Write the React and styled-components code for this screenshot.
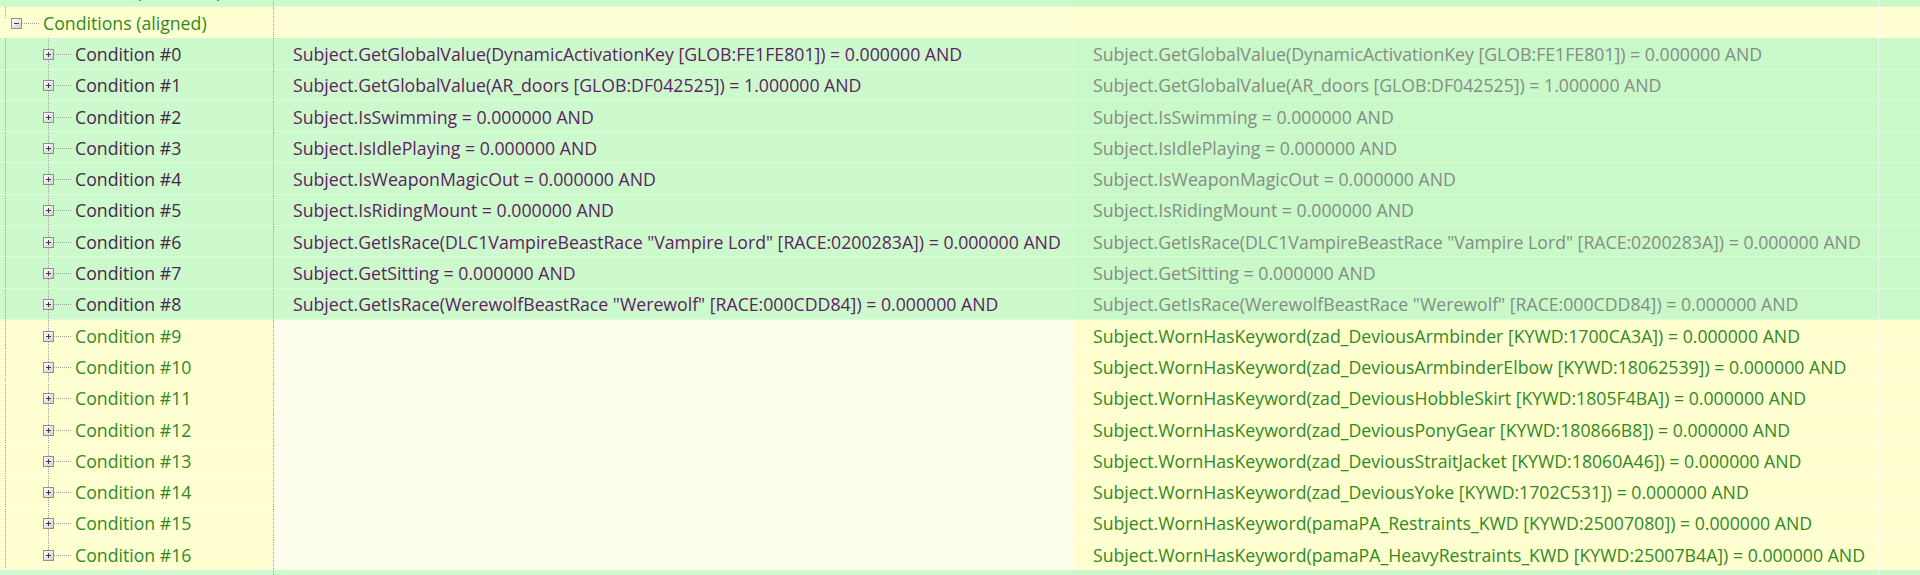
import React from 'react';
import styled, { createGlobalStyle } from 'styled-components';

const GlobalStyle = createGlobalStyle`
  html, body {
    margin: 0;
    padding: 0;
    background: #ffffff;
    overflow: hidden;
  }
  body {
    font-family: "Open Sans", "Noto Sans", "Liberation Sans", sans-serif;
  }
`;

const palette = {
  match: { base: '#ccfacc', mid: '#ccfacc', side: '#c9f8c9' },
  header: { base: '#ffffd2', mid: '#ffffd6', side: '#ffffd2' },
  only: { base: '#ffffd2', mid: '#fefeec', side: '#ffffd0' },
};

const conditions = [
  ['Subject.GetGlobalValue(DynamicActivationKey [GLOB:FE1FE801]) = 0.000000 AND', true],
  ['Subject.GetGlobalValue(AR_doors [GLOB:DF042525]) = 1.000000 AND', true],
  ['Subject.IsSwimming = 0.000000 AND', true],
  ['Subject.IsIdlePlaying = 0.000000 AND', true],
  ['Subject.IsWeaponMagicOut = 0.000000 AND', true],
  ['Subject.IsRidingMount = 0.000000 AND', true],
  ['Subject.GetIsRace(DLC1VampireBeastRace "Vampire Lord" [RACE:0200283A]) = 0.000000 AND', true],
  ['Subject.GetSitting = 0.000000 AND', true],
  ['Subject.GetIsRace(WerewolfBeastRace "Werewolf" [RACE:000CDD84]) = 0.000000 AND', true],
  ['Subject.WornHasKeyword(zad_DeviousArmbinder [KYWD:1700CA3A]) = 0.000000 AND', false],
  ['Subject.WornHasKeyword(zad_DeviousArmbinderElbow [KYWD:18062539]) = 0.000000 AND', false],
  ['Subject.WornHasKeyword(zad_DeviousHobbleSkirt [KYWD:1805F4BA]) = 0.000000 AND', false],
  ['Subject.WornHasKeyword(zad_DeviousPonyGear [KYWD:180866B8]) = 0.000000 AND', false],
  ['Subject.WornHasKeyword(zad_DeviousStraitJacket [KYWD:18060A46]) = 0.000000 AND', false],
  ['Subject.WornHasKeyword(zad_DeviousYoke [KYWD:1702C531]) = 0.000000 AND', false],
  ['Subject.WornHasKeyword(pamaPA_Restraints_KWD [KYWD:25007080]) = 0.000000 AND', false],
  ['Subject.WornHasKeyword(pamaPA_HeavyRestraints_KWD [KYWD:25007B4A]) = 0.000000 AND', false],
];

function Expander({ open, x, y }) {
  return (
    <g>
      <rect x={x + 0.5} y={y + 0.5} width="10" height="10" fill="url(#boxfill)" stroke="#8f9090" />
      <line x1={x + 3} y1={y + 5.5} x2={x + 8} y2={y + 5.5} stroke="#3c3c3c" />
      {!open && <line x1={x + 5.5} y1={y + 3} x2={x + 5.5} y2={y + 8} stroke="#3c3c3c" />}
    </g>
  );
}

function Defs() {
  return (
    <defs>
      <linearGradient id="boxfill" x1="0" y1="0" x2="1" y2="1">
        <stop offset="0" stopColor="#ffffff" />
        <stop offset="1" stopColor="#d0d0d0" />
      </linearGradient>
    </defs>
  );
}

function ParentLines({ open }) {
  return (
    <TreeSvg width="43" height="31">
      <Defs />
      <line x1="5.5" y1="0" x2="5.5" y2="11" stroke="#a0a0a0" strokeDasharray="1 1" />
      <line x1="22" y1="16.5" x2="40" y2="16.5" stroke="#a0a0a0" strokeDasharray="1 1" />
      <Expander open={open} x={11} y={11} />
    </TreeSvg>
  );
}

function ChildLines({ last }) {
  return (
    <TreeSvg width="75" height="31">
      <Defs />
      <line x1="5.5" y1="0" x2="5.5" y2="31" stroke="#a0a0a0" strokeDasharray="1 1" />
      <line x1="48.5" y1="0" x2="48.5" y2={last ? 16 : 31} stroke="#a0a0a0" strokeDasharray="1 1" />
      <line x1="54" y1="16.5" x2="72" y2="16.5" stroke="#a0a0a0" strokeDasharray="1 1" />
      <Expander open={false} x={43} y={11} />
    </TreeSvg>
  );
}

export default function App() {
  return (
    <Page>
      <GlobalStyle />
      <Tree>
        <Row kind="match">
          <NameCell kind="match">
            <ParentLines open={false} />
            <Label tone="green">Conditions (unsorted)</Label>
          </NameCell>
          <ValueCell kind="match" />
          <ValueCell kind="match" side />
          <Tail kind="match" />
        </Row>
        <Row kind="header">
          <NameCell kind="header">
            <ParentLines open />
            <Label tone="green">Conditions (aligned)</Label>
          </NameCell>
          <ValueCell kind="header" />
          <ValueCell kind="header" side />
          <Tail kind="header" />
        </Row>
        {conditions.map(([text, both], i) => {
          const kind = both ? 'match' : 'only';
          return (
            <Row key={i} kind={kind}>
              <NameCell kind={kind}>
                <ChildLines last={i === conditions.length - 1} />
                <Label tone={both ? 'plum' : 'green'}>Condition #{i}</Label>
              </NameCell>
              <ValueCell kind={kind}>
                {both && <Value tone="purple">{text}</Value>}
              </ValueCell>
              <ValueCell kind={kind} side>
                <Value tone={both ? 'grey' : 'green'}>{text}</Value>
              </ValueCell>
              <Tail kind={kind} />
            </Row>
          );
        })}
        <Row kind="match">
          <NameCell kind="match" />
          <ValueCell kind="match" />
          <ValueCell kind="match" side />
          <Tail kind="match" />
        </Row>
      </Tree>
    </Page>
  );
}

const tones = {
  green: '#2f8a1f',
  plum: '#46284a',
  purple: '#5e2262',
  grey: '#858d85',
};

const Page = styled.div`
  width: 1920px;
  height: 575px;
  overflow: hidden;
  background: #ffffff;
`;

const Tree = styled.div`
  display: flex;
  flex-direction: column;
  margin-top: -24.3px;
`;

const Row = styled.div`
  display: grid;
  grid-template-columns: 274px 799px 805px 1fr;
  height: 31.3px;
  flex: none;
  box-sizing: border-box;
  border-bottom: 1px solid rgba(255, 255, 255, 0.3);
  background: ${(p) => palette[p.kind].base};
`;

const NameCell = styled.div`
  display: flex;
  align-items: center;
  background: ${(p) => palette[p.kind].base};
  border-right: 1px dotted #a3a3a3;
  overflow: hidden;
  white-space: nowrap;
`;

const ValueCell = styled.div`
  display: flex;
  align-items: center;
  padding-left: ${(p) => (p.side ? '20px' : '19px')};
  background: ${(p) => (p.side ? palette[p.kind].side : palette[p.kind].mid)};
  overflow: hidden;
  white-space: nowrap;
`;

const Tail = styled.div`
  background: ${(p) => palette[p.kind].side};
  border-left: 1px solid rgba(255, 255, 255, 0.7);
`;

const TreeSvg = styled.svg`
  flex: none;
  display: block;
`;

const Label = styled.span`
  font-size: 17.7px;
  color: ${(p) => tones[p.tone]};
  line-height: 31px;
  padding-top: 2px;
`;

const Value = styled.span`
  font-size: 17.7px;
  color: ${(p) => tones[p.tone]};
  line-height: 31px;
  padding-top: 2px;
`;
